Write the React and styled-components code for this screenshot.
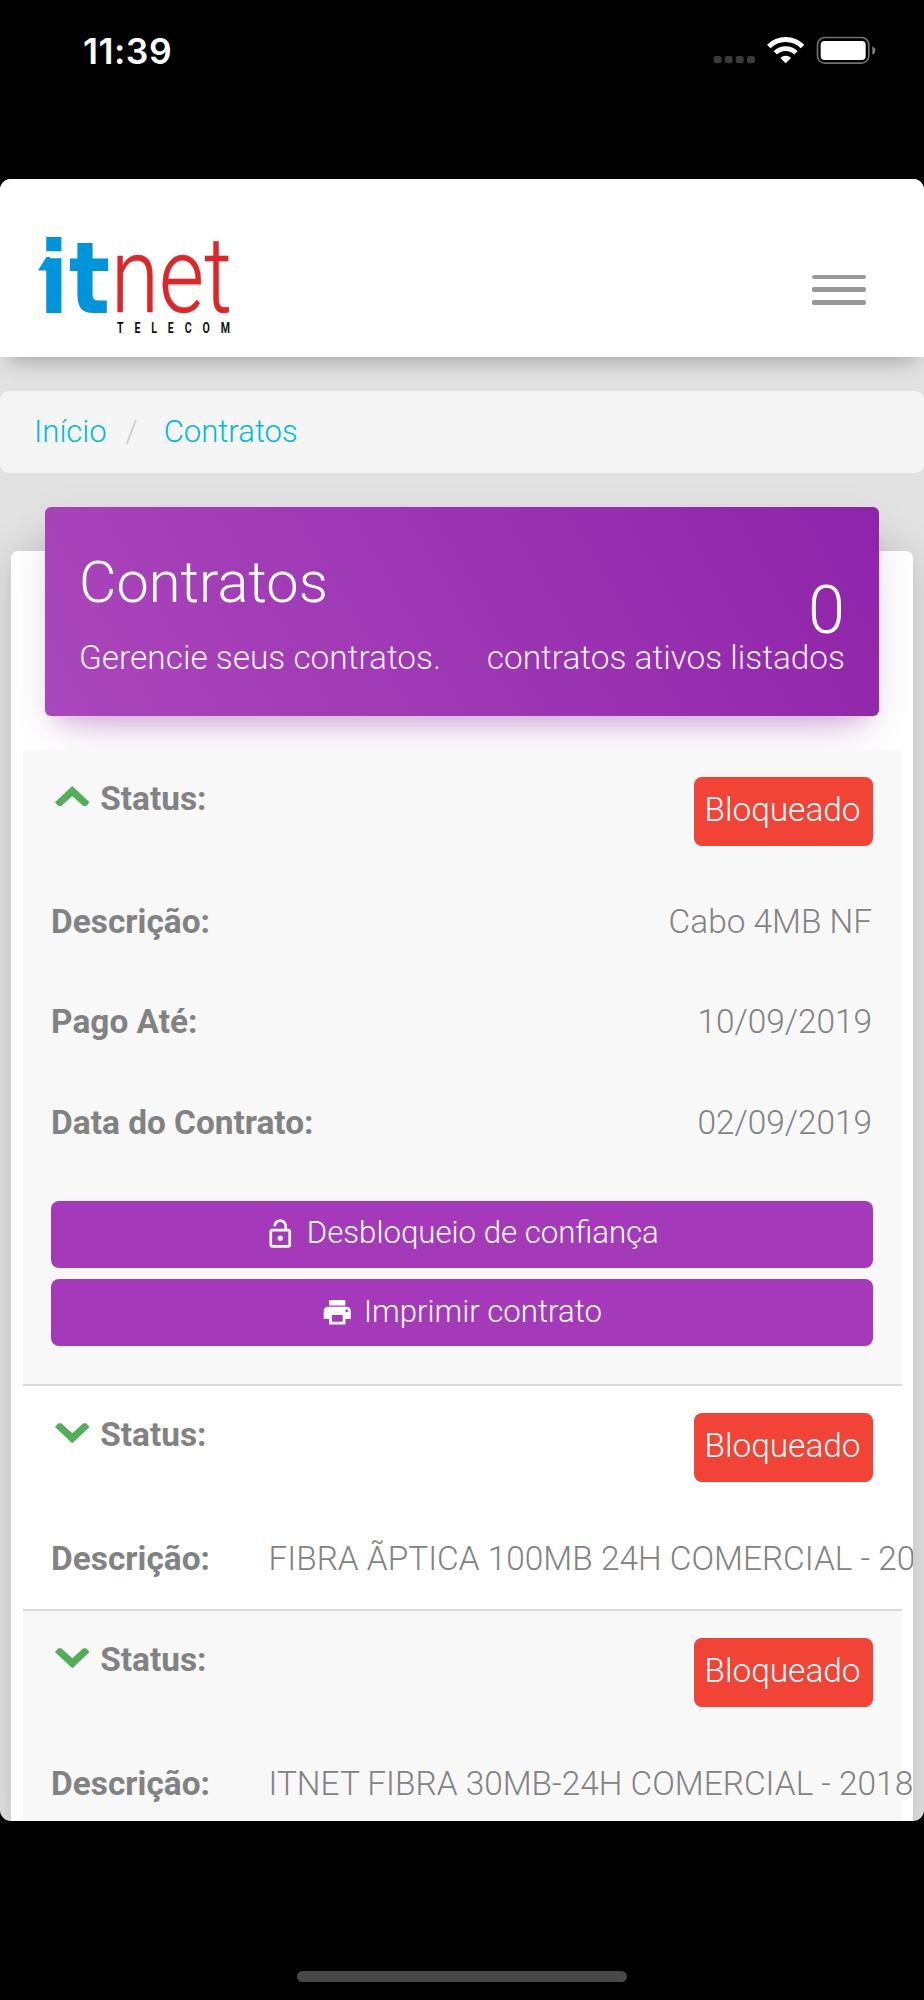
import React from 'react';
import styled, { createGlobalStyle } from 'styled-components';
import { MdLockOpen, MdPrint } from 'react-icons/md';

const GlobalStyle = createGlobalStyle`
  * { box-sizing: border-box; }
  body { margin: 0; background: #000; }
`;

const Screen = styled.div`
  width: 924px;
  height: 2000px;
  display: flex;
  flex-direction: column;
  background: #000;
  font-family: Roboto, 'Liberation Sans', sans-serif;
  font-weight: 300;
  overflow: hidden;
`;

const StatusBar = styled.div`
  flex: none;
  height: 179px;
  padding: 26px 47px 0 83px;
  display: flex;
  justify-content: space-between;
  align-items: flex-start;
`;

const Clock = styled.span`
  font: 600 35.5px/51px Inter, sans-serif;
  letter-spacing: 0.5px;
  color: #fff;
`;

const Signals = styled.svg`
  width: 164px;
  height: 32px;
  margin-top: 9px;
`;

const Viewport = styled.main`
  flex: none;
  height: 1642px;
  display: flex;
  flex-direction: column;
  background: #e2e2e2;
  border-radius: 11px;
  overflow: hidden;
`;

const NavBar = styled.header`
  flex: none;
  height: 178px;
  padding: 52px 58px 0 36px;
  display: flex;
  justify-content: space-between;
  background: #fff;
  box-shadow: 0 9px 40px rgba(0, 0, 0, 0.02), 0 12px 20px -9px rgba(0, 0, 0, 0.28);
`;

const LogoMark = styled.svg`
  width: 200px;
  height: 110px;
  overflow: visible;
`;

const Menu = styled.div`
  width: 54px;
  margin-top: 43.5px;
  display: flex;
  flex-direction: column;
  gap: 8.3px;
`;

const MenuLine = styled.span`
  height: 4.7px;
  border-radius: 2px;
  background: #999;
`;

const Breadcrumb = styled.nav`
  flex: none;
  height: 82px;
  margin: 34px 0 78px;
  padding: 0 34px 2px;
  display: flex;
  align-items: center;
  border-radius: 9px;
  background: #f5f5f5;
  font-size: 31.1px;
  color: #00bcd4;
`;

const Slash = styled.span`
  margin: 0 26px 0 18.5px;
  color: #ccc;
`;

const Card = styled.section`
  flex: 1;
  margin: 0 11px;
  border-radius: 7px 7px 0 0;
  background: #fff;
  box-shadow: 0 4px 45px rgba(0, 0, 0, 0.14), 0 5px 10px rgba(0, 0, 0, 0.04);
`;

const CardHeader = styled.div`
  height: 209px;
  margin: -44px 34px 34px;
  padding: 34px;
  display: flex;
  justify-content: space-between;
  border-radius: 6px;
  color: #fff;
  background: linear-gradient(60deg, #ab47bc, #8e24aa);
  box-shadow: 0 27px 45px -22px rgba(156, 39, 176, 0.28), 0 9px 45px rgba(0, 0, 0, 0.06),
    0 16px 18px -11px rgba(156, 39, 176, 0.2);
`;

const HeaderColumn = styled.div`
  display: flex;
  flex-direction: column;
  align-items: ${(p) => (p.$end ? 'flex-end' : 'flex-start')};
`;

const Title = styled.h1`
  margin: 0;
  font-size: 57.7px;
  font-weight: 300;
  line-height: 83px;
`;

const Count = styled.span`
  height: 43px;
  margin-top: 40px;
  padding-top: 15px;
  display: flex;
  align-items: center;
  font-size: 66.5px;
  line-height: 84px;
`;

const Caption = styled.span`
  font-size: 33.4px;
  line-height: 68px;
  color: rgba(255, 255, 255, 0.95);
`;

const ContractList = styled.div`
  padding: 0 11.5px;
  overflow: hidden;
`;

const Contract = styled.article`
  border-bottom: 2px solid #dadada;
  background: ${(p) => (p.$striped ? '#f8f8f8' : '#fff')};
  color: #828282;
  font-size: 33.4px;
`;

const StatusRow = styled.div`
  height: 121px;
  padding: 27px 29px 0 28.6px;
  display: flex;
  justify-content: space-between;
  align-items: flex-start;
`;

const Label = styled.strong`
  flex: none;
  display: flex;
  align-items: center;
  font-size: 33.4px;
  font-weight: 700;
  line-height: 44px;
`;

const Chevron = styled.svg`
  width: 34.6px;
  height: 20.3px;
  margin: 0 11px 0 3.5px;
  transform: rotate(${(p) => (p.$open ? 0 : 180)}deg);
  margin-bottom: ${(p) => (p.$open ? 6 : 3)}px;
`;

const Badge = styled.span`
  width: 179px;
  height: 69px;
  padding-right: 1px;
  border-radius: 8px;
  background: #f14336;
  color: #fff;
  text-align: center;
  line-height: 66px;
`;

const Field = styled.div`
  height: ${(p) => p.$height || 100.5}px;
  padding: 0 29.4px 0 28.6px;
  display: flex;
  justify-content: space-between;
  align-items: center;
  gap: 58.5px;
`;

const FieldName = styled(Label)`
  padding-top: 1px;
`;

const Value = styled.span`
  white-space: nowrap;
`;

const Actions = styled.div`
  height: 211.5px;
  padding: 28.5px 29px 0 28.6px;
  display: flex;
  flex-direction: column;
  gap: 11.5px;
`;

const ActionButton = styled.button`
  height: 66.7px;
  padding: 0 1px 3px 0;
  display: flex;
  align-items: center;
  justify-content: center;
  gap: 10.5px;
  border: 0;
  border-radius: 8px;
  background: #a43ab9;
  color: #fff;
  font: inherit;
  font-size: 31.2px;

  svg {
    width: 32.5px;
    height: 32.5px;
    margin-top: 2px;
  }
`;

const HomeIndicator = styled.div`
  flex: none;
  width: 330px;
  height: 11px;
  margin: 150px auto 0;
  border-radius: 6px;
  background: #484848;
`;

function StatusIcons() {
  return (
    <Signals viewBox="40 45 492 96">
      {[42, 75, 108, 142].map((x) => (
        <rect key={x} x={x} y="108" width="24" height="22" rx="7" fill="#3a3a3a" />
      ))}
      <g fill="none" stroke="#fff">
        <path d="M207.4 79.4a71.5 71.5 0 0 1 101.2 0" strokeWidth="15" />
        <path d="M226.9 98.9a44 44 0 0 1 62.2 0" strokeWidth="14" />
      </g>
      <path d="M258 130l-16-16a23 23 0 0 1 32 0z" fill="#fff" />
      <rect x="353.5" y="52.5" width="154" height="77" rx="22" fill="none" stroke="#707070" strokeWidth="5" />
      <rect x="363" y="63" width="135" height="57" rx="12" fill="#fff" />
      <path d="M518 79q9 4 9 12.5t-9 12.5z" fill="#808080" />
    </Signals>
  );
}

function Logo() {
  return (
    <LogoMark viewBox="0 0 200 110">
      <path d="M2 39.5L10.5 26H14V39.5Z" fill="#0095db" />
      <text x="3" y="81.5" textLength="71" lengthAdjust="spacingAndGlyphs" fontFamily="DejaVu Sans" fontWeight="700" fontSize="99" fill="#0095db">it</text>
      <text x="75" y="81" textLength="121" lengthAdjust="spacingAndGlyphs" fontFamily="Roboto" fontWeight="300" fontSize="106" fill="#de2528" stroke="#de2528" strokeWidth="0.4">net</text>
      <text transform="translate(81 102.2) scale(0.68 1)" textLength="166" fontFamily="Roboto" fontWeight="700" fontSize="15.5" fill="#111">TELECOM</text>
    </LogoMark>
  );
}

function StatusLine({ open }) {
  return (
    <StatusRow>
      <Label>
        <Chevron viewBox="0 0 34.6 20.3" $open={open}>
          <path d="M17.3 0L34.6 16.2L31 20.3H28.6L17.3 10L6 20.3H3.6L0 16.2Z" fill="#53af57" />
        </Chevron>
        Status:
      </Label>
      <Badge>Bloqueado</Badge>
    </StatusRow>
  );
}

export default function App() {
  return (
    <Screen>
      <GlobalStyle />
      <StatusBar>
        <Clock>11:39</Clock>
        <StatusIcons />
      </StatusBar>
      <Viewport>
        <NavBar>
          <Logo />
          <Menu>
            <MenuLine />
            <MenuLine />
            <MenuLine />
          </Menu>
        </NavBar>
        <Breadcrumb>
          <span>Início</span>
          <Slash>/</Slash>
          <span>Contratos</span>
        </Breadcrumb>
        <Card>
          <CardHeader>
            <HeaderColumn>
              <Title>Contratos</Title>
              <Caption>Gerencie seus contratos.</Caption>
            </HeaderColumn>
            <HeaderColumn $end>
              <Count>0</Count>
              <Caption>contratos ativos listados</Caption>
            </HeaderColumn>
          </CardHeader>
          <ContractList>
            <Contract $striped>
              <StatusLine open />
              <Field>
                <FieldName>Descrição:</FieldName>
                <Value>Cabo 4MB NF</Value>
              </Field>
              <Field>
                <FieldName>Pago Até:</FieldName>
                <Value>10/09/2019</Value>
              </Field>
              <Field>
                <FieldName>Data do Contrato:</FieldName>
                <Value>02/09/2019</Value>
              </Field>
              <Actions>
                <ActionButton>
                  <MdLockOpen />
                  Desbloqueio de confiança
                </ActionButton>
                <ActionButton>
                  <MdPrint />
                  Imprimir contrato
                </ActionButton>
              </Actions>
            </Contract>
            <Contract>
              <StatusLine />
              <Field $height={102}>
                <FieldName>Descrição:</FieldName>
                <Value>FIBRA ÃPTICA 100MB 24H COMERCIAL - 2018</Value>
              </Field>
            </Contract>
            <Contract $striped>
              <StatusLine />
              <Field $height={102}>
                <FieldName>Descrição:</FieldName>
                <Value>ITNET FIBRA 30MB-24H COMERCIAL - 2018</Value>
              </Field>
            </Contract>
          </ContractList>
        </Card>
      </Viewport>
      <HomeIndicator />
    </Screen>
  );
}
